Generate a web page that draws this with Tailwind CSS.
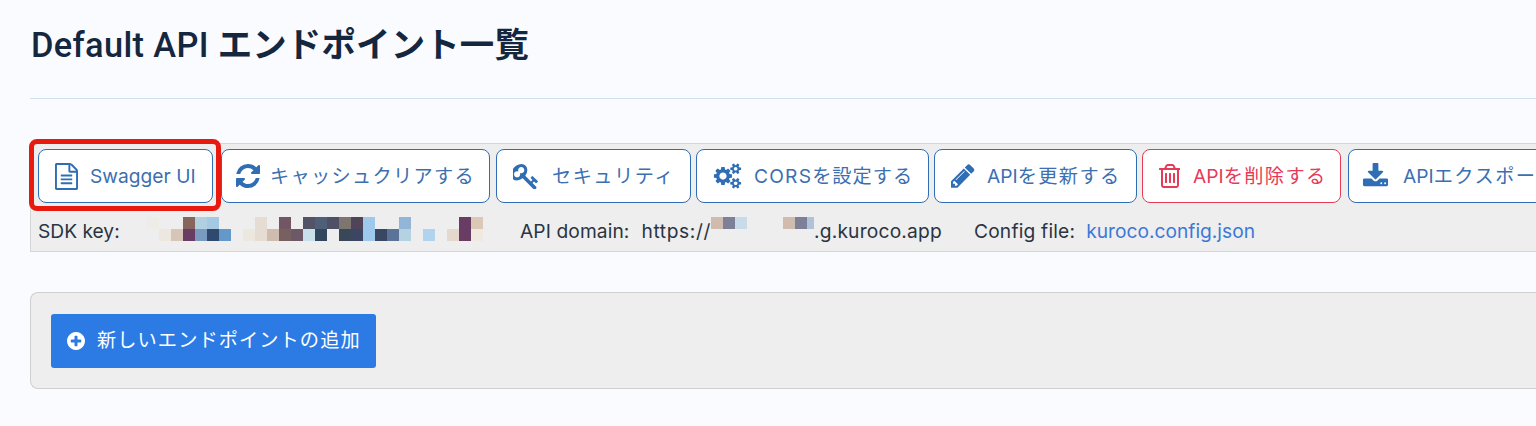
<!doctype html>
<html lang="ja"><head><meta charset="utf-8"><script src="https://cdn.jsdelivr.net/npm/@tailwindcss/browser@4"></script></head>
<body class="bg-[#fafbfe] overflow-hidden font-['Inter','Noto_Sans_CJK_JP',sans-serif]">
<main class="relative h-[426px] w-[1536px] overflow-hidden pl-[30px]">
<h1 class="pt-[24px] pl-[1px] h-[99px] border-b border-[#d3e0ee] text-[34.4px] leading-[42px] font-medium text-[#15273f] font-['Roboto','Noto_Sans_CJK_JP',sans-serif] whitespace-nowrap tracking-[0.35px]">Default API <span class="font-bold tracking-[0.2px]">エンドポイント一覧</span></h1>
<section class="mt-[44px] h-[109px] border border-[#d5d5d5] border-r-0 bg-[#eeeeee] pl-[7px] pt-[5px] text-[19.2px] whitespace-nowrap">
<div class="flex h-[54px] text-[#3c6fb0]">
<a class="flex w-[175px] shrink-0 items-center rounded-[8px] border border-[#2f6db5] bg-white pl-[16px]"><svg class="w-[23px] h-[27px] mr-[12px] fill-[#2f6db5]" viewBox="128 0 1536 1792"><path d="M1596 380q28 28 48 76t20 88v1152q0 40-28 68t-68 28h-1344q-40 0-68-28t-28-68v-1600q0-40 28-68t68-28h896q40 0 88 20t76 48zm-444-244v376h376q-10-29-22-41l-313-313q-12-12-41-22zm384 1528v-1024h-416q-40 0-68-28t-28-68v-416h-768v1536h1280zm-1024-864q0-14 9-23t23-9h704q14 0 23 9t9 23v64q0 14-9 23t-23 9h-704q-14 0-23-9t-9-23v-64zm736 224q14 0 23 9t9 23v64q0 14-9 23t-23 9h-704q-14 0-23-9t-9-23v-64q0-14 9-23t23-9h704zm0 256q14 0 23 9t9 23v64q0 14-9 23t-23 9h-704q-14 0-23-9t-9-23v-64q0-14 9-23t23-9h704z"/></svg>Swagger UI</a>
<a class="ml-[8px] flex w-[269px] shrink-0 items-center rounded-[8px] border border-[#2f6db5] bg-white pl-[14px]"><svg class="size-[24px] mr-[10px] fill-[#2f6db5]" viewBox="128 128 1536 1536"><path d="M1639 1056q0 5-1 7-64 268-268 434.5t-478 166.5q-146 0-282.5-55t-243.5-157l-129 129q-19 19-45 19t-45-19-19-45v-448q0-26 19-45t45-19h448q26 0 45 19t19 45-19 45l-137 137q71 66 161 102t187 36q134 0 250-65t186-179q11-17 53-117 8-23 30-23h192q13 0 22.5 9.5t9.5 22.5zm25-800v448q0 26-19 45t-45 19h-448q-26 0-45-19t-19-45 19-45l138-138q-148-137-349-137-134 0-250 65t-186 179q-11 17-53 117-8 23-30 23h-199q-13 0-22.5-9.5t-9.5-22.5v-7q65-268 270-434.5t480-166.5q146 0 284 55.5t245 156.5l130-129q19-19 45-19t45 19 19 45z"/></svg><span class="tracking-[1.3px]">キャッシュクリアする</span></a>
<a class="ml-[6px] flex w-[195px] shrink-0 items-center rounded-[8px] border border-[#2f6db5] bg-white pl-[16px]"><svg class="size-[25px] mr-[14px] fill-[#2f6db5]" viewBox="128 128 1560 1560"><path d="M832 512q0-80-56-136t-136-56-136 56-56 136q0 42 19 83-41-19-83-19-80 0-136 56t-56 136 56 136 136 56 136-56 56-136q0-42-19-83 41 19 83 19 80 0 136-56t56-136zm851 704q0 17-49 66t-66 49q-9 0-28.5-16t-36.5-33-38.5-40-24.5-26l-96 96 220 220q28 28 28 68 0 42-39 81t-81 39q-40 0-68-28l-671-671q-176 131-365 131-163 0-265.5-102.5t-102.5-265.5q0-160 95-313t248-248 313-95q163 0 265.5 102.5t102.5 265.5q0 189-131 365l355 355 96-96q-3-3-26-24.5t-40-38.5-33-36.5-16-28.5q0-17 49-66t66-49q13 0 23 10 6 6 46 44.5t82 79.5 86.5 86 73 78 28.5 41z"/></svg><span class="tracking-[1.5px]">セキュリティ</span></a>
<a class="ml-[5px] flex w-[233px] shrink-0 items-center rounded-[8px] border border-[#2f6db5] bg-white pl-[16px]"><svg class="w-[29px] h-[26px] mr-[12px] fill-[#2f6db5]" viewBox="0 128 2048 1536"><path d="M960 896q0-106-75-181t-181-75-181 75-75 181 75 181 181 75 181-75 75-181zm768 512q0-52-38-90t-90-38-90 38-38 90q0 53 37.5 90.5t90.5 37.5 90.5-37.5 37.5-90.5zm0-1024q0-52-38-90t-90-38-90 38-38 90q0 53 37.5 90.5t90.5 37.5 90.5-37.5 37.5-90.5zm-384 421v185q0 10-7 19.5t-16 10.5l-155 24q-11 35-32 76 34 48 90 115 7 11 7 20 0 12-7 19-23 30-82.5 89.5t-78.5 59.5q-11 0-21-7l-115-90q-37 19-77 31-11 108-23 155-7 24-30 24h-186q-11 0-20-7.5t-10-17.5l-23-153q-34-10-75-31l-118 89q-7 7-20 7-11 0-21-8-144-133-144-160 0-9 7-19 10-14 41-53t47-61q-23-44-35-82l-152-24q-10-1-17-9.5t-7-19.5v-185q0-10 7-19.5t16-10.5l155-24q11-35 32-76-34-48-90-115-7-11-7-20 0-12 7-20 22-30 82-89t79-59q11 0 21 7l115 90q34-18 77-32 11-108 23-154 7-24 30-24h186q11 0 20 7.5t10 17.5l23 153q34 10 75 31l118-89q8-7 20-7 11 0 21 8 144 133 144 160 0 8-7 19-12 16-42 54t-45 60q23 48 34 82l152 23q10 2 17 10.5t7 19.5zm640 533v140q0 16-149 31-12 27-30 52 51 113 51 138 0 4-4 7-122 71-124 71-8 0-46-47t-52-68q-20 2-30 2t-30-2q-14 21-52 68t-46 47q-2 0-124-71-4-3-4-7 0-25 51-138-18-25-30-52-149-15-149-31v-140q0-16 149-31 13-29 30-52-51-113-51-138 0-4 4-7 4-2 35-20t59-34 30-16q8 0 46 46.5t52 67.5q20-2 30-2t30 2q51-71 92-112l6-2q4 0 124 70 4 3 4 7 0 25-51 138 17 23 30 52 149 15 149 31zm0-1024v140q0 16-149 31-12 27-30 52 51 113 51 138 0 4-4 7-122 71-124 71-8 0-46-47t-52-68q-20 2-30 2t-30-2q-14 21-52 68t-46 47q-2 0-124-71-4-3-4-7 0-25 51-138-18-25-30-52-149-15-149-31v-140q0-16 149-31 13-29 30-52-51-113-51-138 0-4 4-7 4-2 35-20t59-34 30-16q8 0 46 46.5t52 67.5q20-2 30-2t30 2q51-71 92-112l6-2q4 0 124 70 4 3 4 7 0 25-51 138 17 23 30 52 149 15 149 31z"/></svg><span class="tracking-[1px]"><span class="tracking-[1.2px]">CORS</span>を設定する</span></a>
<a class="ml-[5px] flex w-[203px] shrink-0 items-center rounded-[8px] border border-[#2f6db5] bg-white pl-[16px]"><svg class="size-[24px] mr-[12px] fill-[#2f6db5]" viewBox="128 128 1560 1560"><path d="M491 1536l91-91-235-235-91 91v107h128v128h107zm523-928q0-22-22-22-10 0-17 7l-542 542q-7 7-7 17 0 22 22 22 10 0 17-7l542-542q7-7 7-17zm-54-192l416 416-832 832h-416v-416zm683 96q0 53-37 90l-166 166-416-416 166-165q36-38 90-38 53 0 91 38l235 234q37 39 37 91z"/></svg>API<span class="tracking-[1.4px]">を更新する</span></a>
<a class="ml-[5px] flex w-[199px] shrink-0 items-center rounded-[8px] border border-[#e63a57] bg-white pl-[15px] text-[#e63a57]"><svg class="w-[22px] h-[25px] mr-[13px] fill-[#e63a57]" viewBox="128 128 1408 1600"><path d="M704 736v576q0 14-9 23t-23 9h-64q-14 0-23-9t-9-23v-576q0-14 9-23t23-9h64q14 0 23 9t9 23zm256 0v576q0 14-9 23t-23 9h-64q-14 0-23-9t-9-23v-576q0-14 9-23t23-9h64q14 0 23 9t9 23zm256 0v576q0 14-9 23t-23 9h-64q-14 0-23-9t-9-23v-576q0-14 9-23t23-9h64q14 0 23 9t9 23zm128 724v-948h-896v948q0 22 7 40.5t14.5 27 10.5 8.5h832q3 0 10.5-8.5t14.5-27 7-40.5zm-672-1076h448l-48-117q-7-9-17-11h-317q-10 2-17 11zm928 32v64q0 14-9 23t-23 9h-96v948q0 83-47 143.5t-113 60.5h-832q-66 0-113-58.5t-47-141.5v-952h-96q-14 0-23-9t-9-23v-64q0-14 9-23t23-9h309l70-167q15-37 54-63t79-26h320q40 0 79 26t54 63l70 167h309q14 0 23 9t9 23z"/></svg>API<span class="tracking-[1.4px]">を削除する</span></a>
<a class="ml-[7px] flex w-[260px] shrink-0 items-center rounded-[8px] border border-[#2f6db5] bg-white pl-[13px]"><svg class="size-[27px] mr-[14px] fill-[#2f6db5]" viewBox="0 128 1792 1536"><path d="M1344 1344q0-26-19-45t-45-19-45 19-19 45 19 45 45 19 45-19 19-45zm256 0q0-26-19-45t-45-19-45 19-19 45 19 45 45 19 45-19 19-45zm128-224v320q0 40-28 68t-68 28h-1472q-40 0-68-28t-28-68v-320q0-40 28-68t68-28h465l135 136q58 56 136 56t136-56l136-136h464q40 0 68 28t28 68zm-325-569q17 41-14 70l-448 448q-18 19-45 19t-45-19l-448-448q-31-29-14-70 17-39 59-39h256v-448q0-26 19-45t45-19h256q26 0 45 19t19 45v448h256q42 0 59 39z"/></svg>API<span class="tracking-[1.5px]">エクスポート</span></a>
</div>
<div class="mt-[14px] flex h-[24px] items-center text-[#2a3442]">
<span class="w-[109px] pt-[4px]">SDK key:</span>
<svg class="w-[342px] h-[24px]" viewBox="0 0 342 24" shape-rendering="crispEdges"><rect x="0" y="0" width="12" height="12" fill="#eeece6"/><rect x="36" y="0" width="12" height="12" fill="#85655c"/><rect x="48" y="0" width="12" height="12" fill="#b0d0e2"/><rect x="60" y="0" width="12" height="12" fill="#a6c9e3"/><rect x="108" y="0" width="12" height="12" fill="#e5ddd3"/><rect x="132" y="0" width="12" height="12" fill="#735663"/><rect x="156" y="0" width="12" height="12" fill="#535368"/><rect x="168" y="0" width="12" height="12" fill="#4f5f78"/><rect x="180" y="0" width="12" height="12" fill="#4f5066"/><rect x="192" y="0" width="12" height="12" fill="#7d7570"/><rect x="204" y="0" width="12" height="12" fill="#504459"/><rect x="216" y="0" width="12" height="12" fill="#9fc9ec"/><rect x="252" y="0" width="12" height="12" fill="#93b6d8"/><rect x="312" y="0" width="12" height="12" fill="#683c63"/><rect x="324" y="0" width="12" height="12" fill="#dbc9b8"/>
<rect x="12" y="12" width="12" height="12" fill="#ece7df"/><rect x="24" y="12" width="12" height="12" fill="#d7c6b8"/><rect x="36" y="12" width="12" height="12" fill="#683c63"/><rect x="48" y="12" width="12" height="12" fill="#7a9bbf"/><rect x="60" y="12" width="12" height="12" fill="#2f4a6e"/><rect x="72" y="12" width="12" height="12" fill="#6398c8"/><rect x="96" y="12" width="12" height="12" fill="#ece7df"/><rect x="108" y="12" width="12" height="12" fill="#e5ddd3"/><rect x="120" y="12" width="12" height="12" fill="#cfbcae"/><rect x="132" y="12" width="12" height="12" fill="#785f60"/><rect x="144" y="12" width="12" height="12" fill="#6d5865"/><rect x="156" y="12" width="12" height="12" fill="#c8e0ea"/><rect x="168" y="12" width="12" height="12" fill="#31475f"/><rect x="192" y="12" width="12" height="12" fill="#3a4759"/><rect x="204" y="12" width="12" height="12" fill="#3c4562"/><rect x="216" y="12" width="12" height="12" fill="#9fc9ec"/><rect x="228" y="12" width="12" height="12" fill="#3a4762"/><rect x="240" y="12" width="12" height="12" fill="#5b7397"/><rect x="252" y="12" width="12" height="12" fill="#b5d2e2"/><rect x="276" y="12" width="12" height="12" fill="#b0d3ee"/><rect x="300" y="12" width="12" height="12" fill="#e5d8cc"/><rect x="312" y="12" width="12" height="12" fill="#683c63"/><rect x="324" y="12" width="12" height="12" fill="#efe9e0"/></svg>
<span class="ml-[31px] pt-[4px] tracking-[0.1px]">API domain:</span><span class="ml-[12px] pt-[4px] tracking-[0.6px]">https://</span>
<svg class="w-[103px] h-[12px] -translate-y-[6px]" viewBox="0 0 103 12" shape-rendering="crispEdges"><rect width="12" height="12" fill="#cfbcae"/><rect x="12" width="12" height="12" fill="#7d8098"/><rect x="24" width="12" height="12" fill="#c9dbe8"/><rect x="72" width="12" height="12" fill="#cfbcae"/><rect x="84" width="12" height="12" fill="#7d8098"/><rect x="96" width="7" height="12" fill="#b0c2d8"/></svg>
<span class="pt-[4px] tracking-[0.2px]">.g.kuroco.app</span>
<span class="ml-[32px] pt-[4px] tracking-[0.2px]">Config file:</span><span class="ml-[11px] pt-[4px] text-[#3c78d8]">kuroco.config.json</span>
</div>
</section>
<section class="mt-[40px] h-[97px] rounded-l-[8px] border border-r-0 border-[#cfcfcf] bg-[#eeeeee] pl-[20px] pt-[21px]">
<a class="flex h-[54px] w-[325px] items-center rounded-[3px] bg-[#2c7be5] pl-[16px] text-[19.2px] text-white"><svg class="size-[18px] mr-[12px] fill-white" viewBox="128 128 1536 1536"><path d="M1344 960v-128q0-26-19-45t-45-19h-256v-256q0-26-19-45t-45-19h-128q-26 0-45 19t-19 45v256h-256q-26 0-45 19t-19 45v128q0 26 19 45t45 19h256v256q0 26 19 45t45 19h128q26 0 45-19t19-45v-256h256q26 0 45-19t19-45zm320-64q0 209-103 385.5t-279.5 279.5-385.5 103-385.5-103-279.5-279.5-103-385.5 103-385.5 279.5-279.5 385.5-103 385.5 103 279.5 279.5 103 385.5z"/></svg><span class="tracking-[1.1px] pb-[2px]">新しいエンドポイントの追加</span></a>
</section>
<div class="absolute left-[29px] top-[139px] h-[72px] w-[192px] rounded-[8px] border-[5px] border-[#e8190f]"></div>
</main></body></html>
